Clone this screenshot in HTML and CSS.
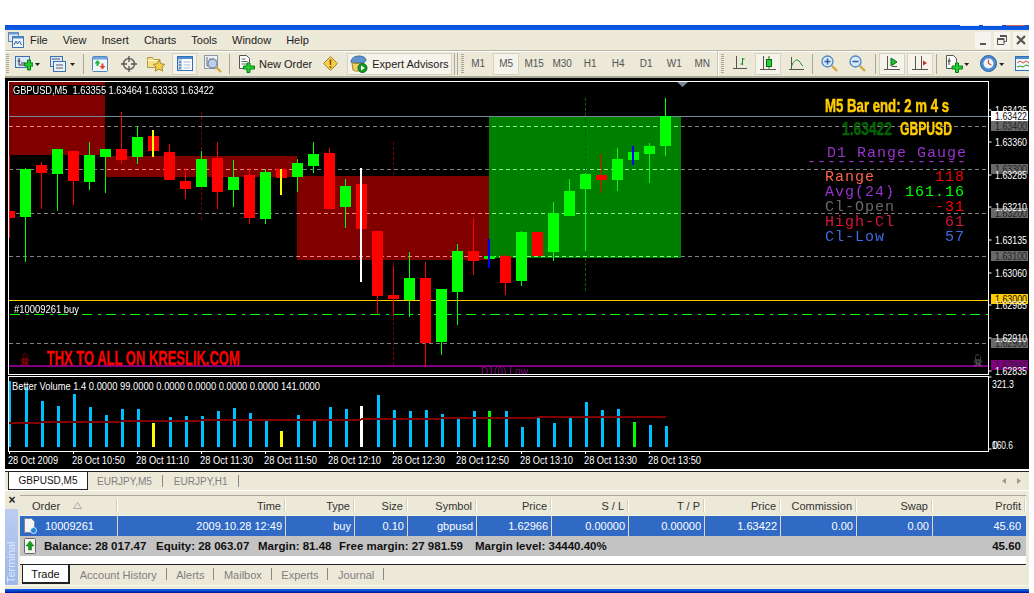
FILE: index.html
```html
<!DOCTYPE html>
<html lang="en">
<head>
<meta charset="utf-8">
<title>MetaTrader GBPUSD,M5</title>
<link rel="stylesheet" href="styles.css">
</head>
<body>
<div class="app">
  <div class="titlebar"><i class="cap"></i><i class="cap"></i><i class="cap red"></i></div>

  <div class="menubar">
    <svg class="appicon" width="16" height="16" viewBox="0 0 16 16"><rect x="0.5" y="0.5" width="10" height="9" fill="#dfe9f7" stroke="#5a86b8"/><rect x="0.5" y="0.5" width="10" height="2" fill="#6c97c9"/><rect x="4.5" y="4.5" width="11" height="11" fill="#eef4fb" stroke="#3f74b3"/><rect x="4.5" y="4.5" width="11" height="2" fill="#4f86c4"/><path d="M6 13l2-4 1.500 3 2-3 2 4" fill="none" stroke="#35608f"/></svg>
    <span class="mi">File</span><span class="mi">View</span><span class="mi">Insert</span><span class="mi">Charts</span><span class="mi">Tools</span><span class="mi">Window</span><span class="mi">Help</span>
    <div class="mdi">
      <span class="mdibtn"><svg width="9" height="9" viewBox="0 0 9 9"><path d="M1 7h6v2H1z" fill="#555"/></svg></span>
      <span class="mdibtn"><svg width="10" height="10" viewBox="0 0 10 10"><path d="M3 .5h6.500v6H7M.5 3.500h6.500v6H.5z M3 1.500h6.500M.5 4.500H7" fill="none" stroke="#555"/></svg></span>
      <span class="mdibtn"><svg width="10" height="10" viewBox="0 0 10 10"><path d="M1 1l8 8M9 1l-8 8" stroke="#555" stroke-width="2.200"/></svg></span>
    </div>
  </div>

  <div class="toolbar">
    <i class="grip"></i>
    <svg class="ml6" width="18" height="16" viewBox="0 0 18 16"><rect x=".5" y=".5" width="14" height="11" fill="#dbe8f7" stroke="#3b6fb0"/><path d="M4 2v7h8M2.500 5h3M6 7h4" stroke="#334" fill="none"/><path d="M9.500 7h3V4h3v3h2.500v3h-2.500v4h-3v-4h-3z" fill="#1fd12c" stroke="#0a7d17"/></svg>
    <i class="caret ml2"></i>
    <svg class="ml10" width="16" height="16" viewBox="0 0 16 16"><rect x=".5" y=".5" width="12" height="10" fill="#dbe8f7" stroke="#3b6fb0"/><rect x="3.500" y="5.500" width="12" height="10" fill="#e9f1fa" stroke="#3b6fb0"/><path d="M2 3h8M6 9h7M6 12h7" stroke="#556"/></svg>
    <i class="caret ml4"></i>
    <i class="sep ml8"></i>
    <svg class="ml8" width="16" height="16" viewBox="0 0 16 16"><rect x=".5" y=".5" width="15" height="15" rx="1" fill="#f2f6fb" stroke="#4e86c2"/><rect x="1" y="1" width="14" height="2.500" fill="#6fa4dc"/><path d="M5.500 4L2.500 7.500h2V10h2V7.500h2z" fill="#1eb52c"/><path d="M10.500 13.500l3-3.500h-2V7.500h-2V10h-2z" fill="#e2452b"/></svg>
    <svg class="ml13" width="16" height="16" viewBox="0 0 16 16"><circle cx="8" cy="8" r="5.500" fill="none" stroke="#666" stroke-width="1.500"/><path d="M8 0v6M8 10v6M0 8h6M10 8h6" stroke="#555" stroke-width="1.300"/></svg>
    <svg class="ml10" width="18" height="17" viewBox="0 0 18 17"><path d="M.5 2.500h5l1.500 2h6v8H.5z" fill="#f6e08a" stroke="#b39a4a"/><path d="M.5 5.500h12" stroke="#fff6c8"/><path d="M12 5l1.800 3.800 4 .5-2.900 2.800.8 4-3.700-2-3.700 2 .8-4-2.900-2.800 4-.5z" fill="#f3cf4a" stroke="#a98a2a"/></svg>
    <span class="pressed w25 ml7"><svg width="16" height="15" viewBox="0 0 16 15"><rect x=".5" y=".5" width="15" height="14" fill="#fff" stroke="#2f6fb8"/><rect x="1" y="1" width="14" height="2" fill="#4b8bd0"/><rect x="1" y="3" width="4" height="11" fill="#bcd4ef"/><path d="M2 6h2M2 9h2M2 12h2" stroke="#234e85"/><path d="M6.500 6h7M6.500 9h7M6.500 12h7" stroke="#9db8d6"/></svg></span>
    <svg class="ml7" width="18" height="18" viewBox="0 0 18 18"><rect x=".5" y=".5" width="13" height="13" fill="#eef1f5" stroke="#8b9aa8"/><path d="M3 2v9h8M6 3v6M9 3v5" stroke="#667" fill="none"/><circle cx="8.500" cy="8.500" r="4.500" fill="#bcd2ea" stroke="#7a8ea6" stroke-width="1.300"/><path d="M12 12l5 5" stroke="#d7a83a" stroke-width="2.200"/></svg>
    <i class="sep ml7"></i>
    <svg class="ml9" width="16" height="18" viewBox="0 0 16 18"><path d="M.5.500h7l3 3v10H.5z" fill="#fff" stroke="#555"/><path d="M2.500 4h4M2.500 6.500h6M2.500 9h6" stroke="#666"/><path d="M4.500 11h3.500V8h3v3H15.500v3h-4.500v3.500H8V14H4.500z" fill="#1fd12c" stroke="#0a7d17"/></svg>
    <span class="tlabel ml4">New Order</span>
    <svg class="ml11" width="15" height="15" viewBox="0 0 15 15"><path d="M7.500.5l7 7-7 7-7-7z" fill="#f3cf4a" stroke="#a9852a"/><path d="M6.500 3.500h2l-.4 5.500H6.900zM6.600 10.200h1.800V12H6.600z" fill="#8a4a10"/></svg>
    <span class="pressed w105 ml9">
      <svg width="18" height="18" viewBox="0 0 18 18"><path d="M1 7c0-4 4-6 8-6s7 2 7 4-3 3-7 3-8 0-8-1z" fill="#5e95cf" stroke="#3b6ea5"/><path d="M2 8l1 7c3 2 7 1 8 0l2-6z" fill="#f0cf6a" stroke="#a9852a"/><circle cx="12.500" cy="13" r="4.500" fill="#129a25" stroke="#0b6a18"/><path d="M11 10.500l3.800 2.500-3.800 2.500z" fill="#fff"/></svg>
      <span class="tlabel ml4">Expert Advisors</span>
    </span>
    <i class="dbl ml2"></i>
    <i class="grip ml3"></i>
    <span class="period">M1</span><span class="period on">M5</span><span class="period">M15</span><span class="period">M30</span><span class="period">H1</span><span class="period">H4</span><span class="period">D1</span><span class="period">W1</span><span class="period">MN</span>
    <i class="sep2 ml1"></i>
    <i class="grip ml2"></i>
    <svg class="ml9" width="14" height="15" viewBox="0 0 14 15"><path d="M3.500 0v13M0 12.500h14" stroke="#555" fill="none"/><path d="M9.500 2v7M7.500 8h2M9.500 3h2" stroke="#0a8a1c" fill="none"/></svg>
    <span class="pressed w26 ml8"><svg width="16" height="16" viewBox="0 0 16 16"><path d="M3.500 0v14M0 13.500h16" stroke="#555" fill="none"/><rect x="6.500" y="3.500" width="5" height="7" fill="#22d032" stroke="#0a6a15"/><path d="M9 0v3M9 10.500v2" stroke="#0a6a15"/></svg></span>
    <svg class="ml8" width="15" height="15" viewBox="0 0 15 15"><path d="M2.500 1v13M0 13.500h15" stroke="#555" fill="none"/><path d="M2.500 10C5 4 8 3 10 5s2 4 4 5" stroke="#198a2a" fill="none"/></svg>
    <i class="sep ml8"></i>
    <svg class="ml8" width="17" height="17" viewBox="0 0 17 17"><circle cx="6.500" cy="6.500" r="5.500" fill="#d9e8f8" stroke="#4d86c2" stroke-width="1.300"/><path d="M3.500 6.500h6M6.500 3.500v6" stroke="#2b5f9e" stroke-width="1.500"/><path d="M11 11l5 5" stroke="#d7a83a" stroke-width="2.400"/></svg>
    <svg class="ml11" width="17" height="17" viewBox="0 0 17 17"><circle cx="6.500" cy="6.500" r="5.500" fill="#d9e8f8" stroke="#4d86c2" stroke-width="1.300"/><path d="M3.500 6.500h6" stroke="#2b5f9e" stroke-width="1.500"/><path d="M11 11l5 5" stroke="#d7a83a" stroke-width="2.400"/></svg>
    <i class="sep ml9"></i>
    <span class="pressed w26 ml3"><svg width="16" height="15" viewBox="0 0 16 15"><path d="M3.500 0v14M0 13.500h16M8 10.500h5" stroke="#555" fill="none"/><path d="M7 2l6 4-6 4z" fill="#20c22e" stroke="#0a6a15"/></svg></span>
    <span class="pressed w26 ml2"><svg width="16" height="15" viewBox="0 0 16 15"><path d="M3.500 0v14M0 13.500h16M9.500 0v14" stroke="#555" fill="none"/><path d="M11 4.500L15 7l-4 2.500z" fill="#c9301e"/></svg></span>
    <i class="sep ml3"></i>
    <svg class="ml9" width="17" height="18" viewBox="0 0 17 18"><path d="M.5.500h7l3 3v10H.5z" fill="#fff" stroke="#555"/><path d="M4 3c-1 0-1 1-1 3v4M1.800 6h3" stroke="#333" fill="none"/><path d="M6 11h3.500V8h3v3H16.500v3H12.500v3.500h-3V14H6z" fill="#1fd12c" stroke="#0a7d17"/></svg>
    <i class="caret ml1"></i>
    <svg class="ml11" width="17" height="17" viewBox="0 0 17 17"><circle cx="8.500" cy="8.500" r="8" fill="#4b8bd0" stroke="#2a5f9e"/><circle cx="8.500" cy="8.500" r="5" fill="#f5f8fc"/><path d="M8.500 4.500v4l3 1.500" stroke="#c7522a" fill="none" stroke-width="1.200"/></svg>
    <i class="caret ml2"></i>
    <svg class="ml11" width="14" height="15" viewBox="0 0 14 15"><rect x=".5" y=".5" width="16" height="14" fill="#f3f7fc" stroke="#2f6fb8"/><rect x="1" y="1" width="15" height="2" fill="#4b8bd0"/><path d="M2 7l3-2 3 2 3-2 3 2" stroke="#c7522a" fill="none"/><path d="M2 11l3-1 3 1 3-2 3 1" stroke="#1f9a2c" fill="none"/></svg>
  </div>

  <svg class="workspace" width="1024" height="391" viewBox="5 78 1024 391">
    <defs>
      <clipPath id="mainclip"><rect x="9" y="82" width="979" height="292"/></clipPath>
      <clipPath id="lowclip"><rect x="9" y="377" width="979" height="74"/></clipPath>
    </defs>
    <rect x="5" y="78" width="1024" height="391" fill="#000"/>

    <g clip-path="url(#mainclip)">
      <rect x="9" y="82" width="96" height="73" fill="#800000"/>
      <rect x="105" y="156" width="192" height="21" fill="#800000"/>
      <rect x="297" y="176" width="192" height="84" fill="#800000"/>
      <rect x="489" y="116" width="192" height="142" fill="#008000"/>

      <path class="dash" d="M9 126.500H988M9 169.500H988M9 213.500H988M9 256.500H988M9 343.500H988"/>
      <rect x="9" y="116" width="979" height="1" fill="#778899"/>
      <rect x="9" y="300" width="979" height="1" fill="#ffcc00"/>
      <path class="dashdot" d="M10 314.500H988"/>
      <rect x="9" y="365" width="979" height="2" fill="#800080"/>

      <path class="vred" d="M201.500 112V222M393.500 142V365"/>
      <path class="vgreen" d="M585.500 98V291"/>

      <path class="cred" d="M9 211h6v7h-6zM9 155h1v83h-1zM36 165h11v8H36zM41 162h1v47h-1zM68 151h11v30H68zM73 151h1v54h-1zM116 149h11v11h-11zM121 112h1v52h-1zM148 136h11v15h-11zM164 152h11v28h-11zM169 144h1v36h-1zM180 181h11v8h-11zM185 168h1v31h-1zM212 158h11v34h-11zM217 142h1v67h-1zM244 175h11v43h-11zM249 168h1v56h-1zM276 169h11v9h-11zM324 153h11v56h-11zM329 148h1v61h-1zM356 184h11v45h-11zM372 231h11v65h-11zM377 296h1v18h-1zM388 295h11v4h-11zM393 266h1v50h-1zM420 278h11v65h-11zM425 262h1v105h-1zM468 251h11v10h-11zM473 218h1v57h-1zM500 256h11v27h-11zM505 254h1v41h-1zM532 232h11v24h-11zM596 175h11v5h-11zM601 154h1v39h-1z"/>
      <path class="cgreen" d="M20 169h11v48H20zM25 168h1v94h-1zM52 149h11v25H52zM57 149h1v62h-1zM84 155h11v27H84zM89 142h1v48h-1zM100 149h11v8h-11zM105 149h1v44h-1zM132 137h11v20h-11zM137 126h1v38h-1zM196 159h11v28h-11zM201 151h1v36h-1zM228 177h11v13h-11zM233 160h1v47h-1zM260 172h11v47h-11zM265 169h1v55h-1zM292 163h11v14h-11zM297 159h1v33h-1zM308 154h11v12h-11zM313 142h1v31h-1zM340 186h11v21h-11zM345 179h1v49h-1zM404 278h11v22h-11zM409 252h1v65h-1zM436 289h11v53h-11zM441 342h1v13h-1zM452 251h11v41h-11zM457 244h1v81h-1zM484 256h11v3h-11zM516 232h11v49h-11zM521 231h1v55h-1zM548 213h11v39h-11zM553 202h1v59h-1zM564 191h11v25h-11zM569 179h1v37h-1zM580 174h11v15h-11zM585 173h1v78h-1zM612 159h11v21h-11zM617 148h1v43h-1zM628 152h11v8h-11zM644 146h11v8h-11zM649 143h1v40h-1zM660 116h11v30h-11zM665 98h1v58h-1z"/>
      <rect x="152" y="130" width="2" height="27" fill="#ffff00"/>
      <rect x="280" y="169" width="2" height="26" fill="#ffff00"/>
      <rect x="360" y="168" width="2" height="114" fill="#fff"/>
      <rect x="488" y="239" width="2" height="29" fill="#0000ff"/>
      <rect x="632" y="146" width="2" height="19" fill="#0000ff"/>

      <rect x="13" y="85" width="202" height="10" fill="#000"/>
      <text class="ct" x="13" y="93.500" textLength="201" lengthAdjust="spacingAndGlyphs">GBPUSD,M5  1.63355 1.63464 1.63333 1.63422</text>
      <text class="ct" x="14" y="312.500" textLength="65" lengthAdjust="spacingAndGlyphs">#10009261 buy</text>
      <text class="low" x="481" y="375" textLength="47" lengthAdjust="spacingAndGlyphs">D1(0) Low</text>

      <path d="M677 82h11l-5.500 5z" fill="#778899"/>

      <text class="timer" x="825" y="112" textLength="124" lengthAdjust="spacingAndGlyphs">M5 Bar end: 2 m 4 s</text>
      <text class="sym dgreen" x="842" y="135" textLength="50" lengthAdjust="spacingAndGlyphs">1.63422</text>
      <text class="sym gold" x="900" y="135" textLength="52" lengthAdjust="spacingAndGlyphs">GBPUSD</text>
      <g class="gauge">
        <text class="purple" x="827" y="157">D1 Range Gauge</text>
        <text class="purple" x="807" y="166">----------------</text>
        <text class="tomato" x="825" y="181">Range</text><text class="red end" x="965" y="181">118</text>
        <text class="purple" x="825" y="196">Avg(24)</text><text class="lime end" x="965" y="196">161.16</text>
        <text class="dim" x="825" y="211">Cl-Open</text><text class="red end" x="965" y="211">-31</text>
        <text class="crim" x="825" y="226">High-Cl</text><text class="crim end" x="965" y="226">61</text>
        <text class="royal" x="825" y="241">Cl-Low</text><text class="royal end" x="965" y="241">57</text>
      </g>
      <text class="thx" x="47" y="365" textLength="193" lengthAdjust="spacingAndGlyphs">THX TO ALL ON KRESLIK.COM</text>
      <text class="skull sred" x="20" y="366" textLength="10" lengthAdjust="spacingAndGlyphs">☠</text>
      <text class="skull sgray" x="973" y="367" textLength="10" lengthAdjust="spacingAndGlyphs">☠</text>
    </g>

    <g class="frame">
      <rect x="8.500" y="81.500" width="980" height="293"/>
      <rect x="8.500" y="376.500" width="980" height="75"/>
    </g>

    <g class="ticks">
      <path d="M988.500 110h3M988.500 142h3M988.500 175h3M988.500 207h3M988.500 240h3M988.500 273h3M988.500 305h3M988.500 338h3M988.500 371h3M988.500 116.500h3M988.500 377h3M988.500 449h3"/>
      <path d="M9.500 451v3M73.500 451v3M137.500 451v3M201.500 451v3M265.500 451v3M329.500 451v3M393.500 451v3M457.500 451v3M521.500 451v3M585.500 451v3M649.500 451v3"/>
    </g>

    <g class="axis">
      <text x="995" y="114" textLength="32" lengthAdjust="spacingAndGlyphs">1.63425</text>
      <rect x="991" y="111" width="37" height="10" fill="#fff"/><text class="dark" x="995" y="120" textLength="32" lengthAdjust="spacingAndGlyphs">1.63422</text>
      <rect x="991" y="121" width="37" height="10" fill="#696969"/><text class="onbox" x="995" y="130" textLength="32" lengthAdjust="spacingAndGlyphs">1.63400</text>
      <text x="995" y="146" textLength="32" lengthAdjust="spacingAndGlyphs">1.63360</text>
      <rect x="991" y="164" width="37" height="10" fill="#696969"/><text class="onbox" x="995" y="173" textLength="32" lengthAdjust="spacingAndGlyphs">1.63300</text>
      <text x="995" y="179" textLength="32" lengthAdjust="spacingAndGlyphs">1.63285</text>
      <rect x="991" y="208" width="37" height="10" fill="#696969"/><text class="onbox" x="995" y="217" textLength="32" lengthAdjust="spacingAndGlyphs">1.63200</text>
      <text x="995" y="211" textLength="32" lengthAdjust="spacingAndGlyphs">1.63210</text>
      <text x="995" y="244" textLength="32" lengthAdjust="spacingAndGlyphs">1.63135</text>
      <rect x="991" y="251" width="37" height="10" fill="#696969"/><text class="onbox" x="995" y="260" textLength="32" lengthAdjust="spacingAndGlyphs">1.63100</text>
      <text x="995" y="277" textLength="32" lengthAdjust="spacingAndGlyphs">1.63060</text>
      <rect x="991" y="294" width="37" height="10" fill="#ffcc00"/><text class="dark" x="995" y="303" textLength="32" lengthAdjust="spacingAndGlyphs">1.63000</text>
      <text x="995" y="309" textLength="32" lengthAdjust="spacingAndGlyphs">1.62985</text>
      <rect x="991" y="338" width="37" height="10" fill="#696969"/><text class="onbox" x="995" y="347" textLength="32" lengthAdjust="spacingAndGlyphs">1.62900</text>
      <text x="995" y="342" textLength="32" lengthAdjust="spacingAndGlyphs">1.62910</text>
      <rect x="991" y="360" width="37" height="10" fill="#800080"/><text class="onbox" x="995" y="369" textLength="32" lengthAdjust="spacingAndGlyphs">1.62847</text>
      <text x="995" y="375" textLength="32" lengthAdjust="spacingAndGlyphs">1.62835</text>
      <text x="992" y="388" textLength="22" lengthAdjust="spacingAndGlyphs">321.3</text>
      <text x="992" y="449" textLength="21" lengthAdjust="spacingAndGlyphs">160.6</text>
      <text x="992" y="449">0</text>
    </g>

    <g clip-path="url(#lowclip)">
      <path class="vol" d="M9 381h2v66H9zM25 387h3v60h-3zM41 401h3v46h-3zM57 406h3v41h-3zM73 394h3v53h-3zM89 407h3v40h-3zM105 415h3v32h-3zM121 409h3v38h-3zM137 409h3v38h-3zM169 417h3v30h-3zM185 416h3v31h-3zM201 416h3v31h-3zM217 411h3v36h-3zM233 408h3v39h-3zM249 413h3v34h-3zM265 421h3v26h-3zM297 415h3v32h-3zM313 421h3v26h-3zM329 407h3v40h-3zM345 409h3v38h-3zM377 395h3v52h-3zM393 410h3v37h-3zM409 411h3v36h-3zM425 410h3v37h-3zM441 414h3v33h-3zM457 419h3v28h-3zM473 411h3v36h-3zM505 411h3v36h-3zM521 427h3v20h-3zM537 418h3v29h-3zM553 423h3v24h-3zM569 418h3v29h-3zM585 402h3v45h-3zM601 410h3v37h-3zM617 409h3v38h-3zM649 425h3v22h-3zM665 426h3v21h-3z"/>
      <rect x="152" y="423" width="3" height="24" fill="#ffff00"/>
      <rect x="280" y="431" width="3" height="16" fill="#ffff00"/>
      <rect x="360" y="406" width="3" height="41" fill="#fff"/>
      <rect x="488" y="411" width="3" height="36" fill="#00ff00"/>
      <rect x="633" y="422" width="3" height="25" fill="#00ff00"/>
      <path class="ma" d="M9 423H41M41 422H121M121 421H201M201 420H361M361 419H441M441 418H537M537 417H666"/>
      <text class="ct" x="12" y="390" textLength="308" lengthAdjust="spacingAndGlyphs">Better Volume 1.4 0.0000 99.0000 0.0000 0.0000 0.0000 0.0000 141.0000</text>
    </g>

    <g class="timeaxis">
      <text x="8" y="464" textLength="50" lengthAdjust="spacingAndGlyphs">28 Oct 2009</text>
      <text x="72" y="464" textLength="53" lengthAdjust="spacingAndGlyphs">28 Oct 10:50</text>
      <text x="136" y="464" textLength="53" lengthAdjust="spacingAndGlyphs">28 Oct 11:10</text>
      <text x="200" y="464" textLength="53" lengthAdjust="spacingAndGlyphs">28 Oct 11:30</text>
      <text x="264" y="464" textLength="53" lengthAdjust="spacingAndGlyphs">28 Oct 11:50</text>
      <text x="328" y="464" textLength="53" lengthAdjust="spacingAndGlyphs">28 Oct 12:10</text>
      <text x="392" y="464" textLength="53" lengthAdjust="spacingAndGlyphs">28 Oct 12:30</text>
      <text x="456" y="464" textLength="53" lengthAdjust="spacingAndGlyphs">28 Oct 12:50</text>
      <text x="520" y="464" textLength="53" lengthAdjust="spacingAndGlyphs">28 Oct 13:10</text>
      <text x="584" y="464" textLength="53" lengthAdjust="spacingAndGlyphs">28 Oct 13:30</text>
      <text x="648" y="464" textLength="53" lengthAdjust="spacingAndGlyphs">28 Oct 13:50</text>
    </g>
  </svg>

  <div class="charttabs">
    <span class="ctab active">GBPUSD,M5</span>
    <span class="ctab">EURJPY,M5</span>
    <span class="ctab">EURJPY,H1</span>
    <span class="arrows"><i class="arr left"></i><i class="arr right"></i></span>
  </div>

  <div class="terminal">
    <div class="side">
      <span class="closex">×</span>
      <span class="vtitle">Terminal</span>
    </div>
    <div class="tmain">
      <div class="grid head">
        <span class="left">Order <svg class="sort" width="9" height="7" viewBox="0 0 9 7"><path d="M4.500.5L8.500 6.500H.5z" fill="none" stroke="#aaa"/></svg></span>
        <span>Time</span><span>Type</span><span>Size</span><span>Symbol</span><span>Price</span><span>S / L</span><span>T / P</span><span>Price</span><span>Commission</span><span>Swap</span><span>Profit</span>
      </div>
      <div class="grid row">
        <span class="left first"><svg width="13" height="16" viewBox="0 0 13 16"><path d="M.5.500h7l3 3v11H.5z" fill="#f4f4f4" stroke="#7a8aa0"/><circle cx="9.500" cy="12.500" r="3" fill="#1e88d8" stroke="#d8ecff"/></svg><b class="oid">10009261</b></span>
        <span>2009.10.28 12:49</span><span>buy</span><span>0.10</span><span>gbpusd</span><span>1.62966</span><span>0.00000</span><span>0.00000</span><span>1.63422</span><span>0.00</span><span>0.00</span><span>45.60</span>
      </div>
      <div class="balance">
        <svg width="12" height="16" viewBox="0 0 12 16"><rect x=".5" y=".5" width="11" height="15" rx="1" fill="#f5f5f0" stroke="#666"/><path d="M6 3L2 8h2.500v4h3V8H10z" fill="#12a021" stroke="#0b6a18" stroke-width=".5"/></svg>
        <span class="btext"><b class="b1">Balance: 28 017.47</b><b class="b2">Equity: 28 063.07</b><b class="b3">Margin: 81.48</b><b class="b4">Free margin: 27 981.59</b><b>Margin level: 34440.40%</b></span>
        <b class="btotal">45.60</b>
      </div>
      <div class="blank"></div>
      <div class="ttabs">
        <span class="ttab active">Trade</span>
        <span class="ttab">Account History</span><span class="ttab">Alerts</span><span class="ttab">Mailbox</span><span class="ttab">Experts</span><span class="ttab">Journal</span>
      </div>
    </div>
  </div>
  <div class="bottomedge"></div>
</div>
</body>
</html>
```

FILE: styles.css
```css
* { box-sizing: border-box; }
html, body { margin: 0; padding: 0; background: #fff; overflow: hidden; }
body { width: 1034px; height: 593px; font: 11px "Liberation Sans", Arial, sans-serif; color: #222; }
svg { display: block; flex: none; }
i { display: block; flex: none; }
b { font-weight: 700; }

.app { margin: 25px 5px 0; width: 1024px; height: 568px; display: flex; flex-direction: column; background: #ece9d8; }

.titlebar { height: 5px; background: linear-gradient(#0a4ed8, #0a5ce8); display: flex; justify-content: flex-end; gap: 4px; padding-right: 4px; flex: none; }
.cap { width: 19px; height: 1px; background: #e8eefc; }
.cap.red { background: #c9694a; }

.menubar { height: 20px; flex: none; display: flex; align-items: center; padding-left: 3px; }
.appicon { margin-right: 6px; }
.mi { margin-right: 15px; font-size: 11px; color: #222; }
.mdi { margin-left: auto; display: flex; gap: 3px; }
.mdibtn { width: 16px; height: 17px; background: #f6f4ec; display: flex; align-items: center; justify-content: center; }

.toolbar { height: 28px; flex: none; display: flex; align-items: center; padding-left: 1px; border-top: 1px solid #b9b6a4; border-bottom: 2px solid #aca899; box-shadow: inset 0 1px 0 #fff; overflow: hidden; }
.grip { width: 3px; height: 20px; background: repeating-linear-gradient(#aca899 0 1px, transparent 1px 2px); }
.caret { width: 5px; height: 3px; background: #222; clip-path: polygon(0 0, 100% 0, 50% 100%); margin-top: 2px; }
.sep { width: 1px; height: 20px; background: #aca899; }
.sep2 { width: 2px; height: 26px; background: #c9c6b4; border-right: 1px solid #fff; }
.dbl { width: 4px; height: 22px; border-left: 1px solid #aca899; border-right: 1px solid #aca899; }
.pressed { height: 22px; flex: none; display: flex; align-items: center; justify-content: center; background: #f5f3ea; border: 1px solid #fff; outline: 1px solid #d6d3c2; outline-offset: -1px; }
.w25 { width: 25px; }
.w26 { width: 26px; }
.w105 { width: 105px; justify-content: flex-start; padding-left: 2px; }
.tlabel { white-space: nowrap; color: #222; }
.period { width: 28px; height: 22px; flex: none; display: flex; align-items: center; justify-content: center; color: #555; font-size: 10px; }
.period.on { background: #f5f3ea; outline: 1px solid #d6d3c2; outline-offset: -1px; width: 26px; margin: 0 1px; }

.ml1 { margin-left: 1px; } .ml2 { margin-left: 2px; } .ml3 { margin-left: 3px; } .ml4 { margin-left: 4px; }
.ml5 { margin-left: 5px; } .ml6 { margin-left: 6px; } .ml7 { margin-left: 7px; } .ml8 { margin-left: 8px; }
.ml9 { margin-left: 9px; } .ml10 { margin-left: 10px; } .ml11 { margin-left: 11px; } .ml13 { margin-left: 13px; }

.workspace { flex: none; }
.workspace text { white-space: pre; font-family: "Liberation Sans", Arial, sans-serif; }
.dash { stroke: #808080; stroke-dasharray: 4 3; fill: none; mix-blend-mode: plus-lighter; }
.dashdot { stroke: #00ff00; stroke-dasharray: 10 6 3 5; fill: none; }
.vred { stroke: #800000; stroke-dasharray: 3 2; fill: none; }
.vgreen { stroke: #006400; stroke-dasharray: 3 2; fill: none; }
.cred { fill: #ff0000; }
.cgreen { fill: #00ff00; }
.vol { fill: #00bfff; }
.ma { stroke: #800000; stroke-width: 2; fill: none; }
.frame rect { fill: none; stroke: #fff; }
.ticks path { stroke: #fff; fill: none; }
.ct { fill: #fff; font-size: 10.500px; }
.low { fill: #800080; font-size: 10.500px; }
.axis text { fill: #fff; font-size: 10.500px; }
.axis text.dark { fill: #111; }
.axis text.onbox { fill: #222; }
.timeaxis text { fill: #fff; font-size: 10.500px; }
.timer { fill: #ffcc00; stroke: #ffcc00; stroke-width: .5px; font-size: 19px; font-weight: 700; }
.sym { font-size: 18px; font-weight: 700; stroke-width: .4px; }
.dgreen { fill: #006400; stroke: #006400; }
.gold { fill: #ffcc00; stroke: #ffcc00; }
.gauge text { font-family: "Liberation Mono", "Courier New", monospace; font-size: 15px; letter-spacing: 1px; }
.gauge .end { text-anchor: end; }
.purple { fill: #9932cc; }
.tomato { fill: #ff6347; }
.red { fill: #ff0000; }
.lime { fill: #00ff00; }
.dim { fill: #696969; }
.crim { fill: #dc143c; }
.royal { fill: #4169e1; }
.thx { fill: #ff0000; stroke: #ff0000; stroke-width: .5px; font-size: 20px; font-weight: 700; }
.workspace .skull { font-family: "DejaVu Sans", sans-serif; font-size: 17px; }
.sred { fill: #ff0000; }
.sgray { fill: #808080; }

.charttabs { height: 22px; flex: none; display: flex; align-items: stretch; padding-left: 3px; background: #ece9d8; border-top: 2px solid #fff; box-shadow: inset 0 1px 0 #222; border-bottom: 1px solid #fff; color: #808080; font-size: 10px; }
.ctab { padding: 0 11px; display: flex; align-items: center; position: relative; margin-top: 1px; }
.ctab:not(.active)::after { content: ""; position: absolute; right: 0; top: 3px; bottom: 3px; width: 1px; background: #888; }
.ctab.active { width: 80px; padding: 0; justify-content: center; background: #fff; color: #111; border-right: 1px solid #222; border-bottom: 1px solid #222; border-left: 1px solid #222; }
.ctab.active + .ctab { margin-left: -2px; }
.arrows { margin-left: auto; display: flex; gap: 11px; align-items: center; padding-right: 8px; }
.arr { width: 0; height: 0; border: 3px solid transparent; box-sizing: content-box; }
.arr.left { border-right: 4px solid #999; border-left: 0; }
.arr.right { border-left: 4px solid #999; border-right: 0; }

.terminal { height: 94px; flex: none; display: flex; padding-top: 4px; }
.side { width: 14px; flex: none; display: flex; flex-direction: column; align-items: center; margin-right: 1px; }
.closex { height: 14px; font-weight: 700; font-size: 12px; line-height: 10px; color: #222; }
.vtitle { flex: 1; width: 13px; align-self: flex-start; background: linear-gradient(#9db8e8, #bccdf0); color: #dfe7f8; writing-mode: vertical-rl; transform: rotate(180deg); display: flex; align-items: center; padding-top: 2px; line-height: 13px; }
.tmain { width: 1006px; flex: none; display: flex; flex-direction: column; }
.grid { display: grid; grid-template-columns: 98px 168px 69px 53px 69px 75px 77px 76px 76px 76px 76px 93px; }
.grid span { display: flex; align-items: center; justify-content: flex-end; white-space: nowrap; }
.grid .left { justify-content: flex-start; }
.head { height: 21px; border-top: 1px solid #aca899; border-bottom: 1px solid #f5f3ea; }
.head span { padding-right: 5px; position: relative; color: #333; }
.head span::after { content: ""; position: absolute; right: 0; top: 3px; bottom: 3px; width: 1px; background: #fff; box-shadow: -1px 0 0 #d4d0be; }
.head .left { padding-left: 12px; }
.sort { margin-left: 13px; }
.row { height: 20px; background: #316ac5; color: #fff; }
.row span { padding-right: 3px; border-right: 1px solid #ddd9c6; }
.row span:last-child { border-right: 0; padding-right: 5px; }
.row .first { padding-left: 4px; }
.oid { font-weight: 400; margin-left: 8px; }
.balance { height: 20px; background: #c3c3c3; display: flex; align-items: center; padding-left: 4px; padding-right: 5px; font-size: 11.500px; color: #111; }
.btext { margin-left: 8px; display: flex; white-space: nowrap; }
.b1 { width: 112px; } .b2 { width: 102px; } .b3 { width: 81px; } .b4 { width: 136px; }
.btotal { margin-left: auto; }
.blank { height: 8px; background: #fff; flex: none; }
.ttabs { height: 21px; flex: none; display: flex; border-top: 1px solid #222; color: #808080; padding-left: 2px; }
.ttab { height: 19px; display: flex; align-items: center; padding: 0 9.750px; position: relative; }
.ttab:not(.active)::after { content: ""; position: absolute; right: 0; top: 3px; bottom: 4px; width: 1px; background: #888; }
.ttab.active { width: 48px; padding: 0; justify-content: center; background: #fff; color: #111; border-left: 1px solid #222; border-right: 2px solid #222; border-bottom: 2px solid #222; }
.bottomedge { flex: 1; border-top: 1px solid #f7f5ee; background: linear-gradient(#ece9d8 0 3px, #0a5ce8 3px 4px, #00108c 100%); }
```
